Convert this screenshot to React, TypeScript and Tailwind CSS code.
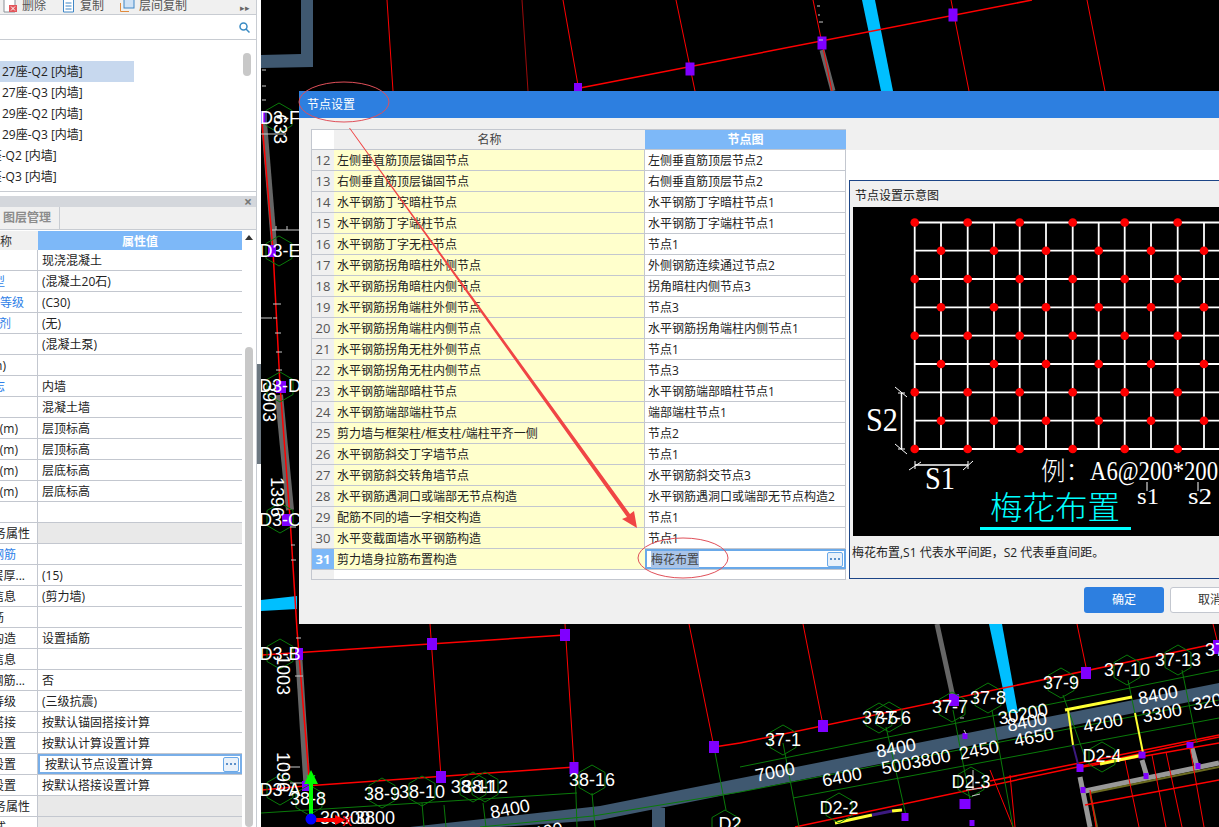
import React from 'react';

const FONT = '"Open Sans", "Noto Sans CJK SC", sans-serif';

type PropRow = {
  label: string;
  right: string;
  value: string;
  blue?: boolean;
  group?: boolean;
  editing?: boolean;
};

const propRows: PropRow[] = [
  { label: '', right: 'pr-0', value: '现浇混凝土' },
  { label: '混凝土类型', right: 'pr-[32px]', value: '(混凝土20石)', blue: true },
  { label: '混凝土强度等级', right: 'pr-[13px]', value: '(C30)', blue: true },
  { label: '混凝土外加剂', right: 'pr-[26px]', value: '(无)', blue: true },
  { label: '', right: 'pr-0', value: '(混凝土泵)' },
  { label: '泵送高度(m)', right: 'pr-[31px]', value: '' },
  { label: '内/外墙标志', right: 'pr-[32px]', value: '内墙', blue: true },
  { label: '', right: 'pr-0', value: '混凝土墙' },
  { label: '起点顶标高(m)', right: 'pr-[19px]', value: '层顶标高' },
  { label: '终点顶标高(m)', right: 'pr-[19px]', value: '层顶标高' },
  { label: '起点底标高(m)', right: 'pr-[19px]', value: '层底标高' },
  { label: '终点底标高(m)', right: 'pr-[19px]', value: '层底标高' },
  { label: '', right: 'pr-0', value: '' },
  { label: '钢筋业务属性', right: 'pr-[7px]', value: '', group: true },
  { label: '其它钢筋', right: 'pr-[21px]', value: '', blue: true },
  { label: '保护层厚...', right: 'pr-[12px]', value: '(15)' },
  { label: '汇总信息', right: 'pr-[21px]', value: '(剪力墙)' },
  { label: '压墙筋', right: 'pr-[33px]', value: '' },
  { label: '纵筋构造', right: 'pr-[21px]', value: '设置插筋' },
  { label: '备注信息', right: 'pr-[21px]', value: '' },
  { label: '水平钢筋...', right: 'pr-[12px]', value: '否' },
  { label: '抗震等级', right: 'pr-[21px]', value: '(三级抗震)' },
  { label: '锚固搭接', right: 'pr-[21px]', value: '按默认锚固搭接计算' },
  { label: '计算设置', right: 'pr-[21px]', value: '按默认计算设置计算' },
  { label: '节点设置', right: 'pr-[21px]', value: '按默认节点设置计算', editing: true },
  { label: '搭接设置', right: 'pr-[21px]', value: '按默认搭接设置计算' },
  { label: '显示业务属性', right: 'pr-[7px]', value: '', group: true },
  { label: '样式', right: 'pr-[31px]', value: '', group: true },
];

const listRows = [
  { text: '27座-Q2 [内墙]', indent: 'ml-[2px]', active: true },
  { text: '27座-Q3 [内墙]', indent: 'ml-[2px]' },
  { text: '29座-Q2 [内墙]', indent: 'ml-[2px]' },
  { text: '29座-Q3 [内墙]', indent: 'ml-[2px]' },
  { text: '27座-Q2 [内墙]', indent: 'ml-[-24px]' },
  { text: '27座-Q3 [内墙]', indent: 'ml-[-24px]' },
];

const nodeRows = [
  [12, '左侧垂直筋顶层锚固节点', '左侧垂直筋顶层节点2'],
  [13, '右侧垂直筋顶层锚固节点', '右侧垂直筋顶层节点2'],
  [14, '水平钢筋丁字暗柱节点', '水平钢筋丁字暗柱节点1'],
  [15, '水平钢筋丁字端柱节点', '水平钢筋丁字端柱节点1'],
  [16, '水平钢筋丁字无柱节点', '节点1'],
  [17, '水平钢筋拐角暗柱外侧节点', '外侧钢筋连续通过节点2'],
  [18, '水平钢筋拐角暗柱内侧节点', '拐角暗柱内侧节点3'],
  [19, '水平钢筋拐角端柱外侧节点', '节点3'],
  [20, '水平钢筋拐角端柱内侧节点', '水平钢筋拐角端柱内侧节点1'],
  [21, '水平钢筋拐角无柱外侧节点', '节点1'],
  [22, '水平钢筋拐角无柱内侧节点', '节点3'],
  [23, '水平钢筋端部暗柱节点', '水平钢筋端部暗柱节点1'],
  [24, '水平钢筋端部端柱节点', '端部端柱节点1'],
  [25, '剪力墙与框架柱/框支柱/端柱平齐一侧', '节点2'],
  [26, '水平钢筋斜交丁字墙节点', '节点1'],
  [27, '水平钢筋斜交转角墙节点', '水平钢筋斜交节点3'],
  [28, '水平钢筋遇洞口或端部无节点构造', '水平钢筋遇洞口或端部无节点构造2'],
  [29, '配筋不同的墙一字相交构造', '节点1'],
  [30, '水平变截面墙水平钢筋构造', '节点1'],
];

// canvas data, in page coordinates
const thinRed = [
  [387, 0, 393, 91], [563, 0, 579, 91], [676, 0, 695, 91], [813, 0, 832, 91], [951, 0, 969, 91], [1087, 0, 1105, 91],
  [430, 624, 441, 777], [565, 624, 574, 765], [689, 624, 714, 747], [803, 624, 822, 720], [1077, 624, 1086, 667], [1213, 624, 1217, 640],
  [1090, 790, 1096, 827], [1125, 760, 1139, 827], [1152, 755, 1166, 827], [1166, 752, 1182, 827], [1190, 748, 1204, 827],
  [990, 770, 1013, 827], [1010, 775, 1015, 827],
];
const thickRed = [
  [580, 88, 1032, 0], [262, 655, 565, 635], [262, 790, 305, 786], [305, 786, 575, 767], [714, 747, 740, 743], [740, 743, 1219, 643],
  [795, 827, 1219, 737], [990, 781, 1219, 735], [1077, 768, 1219, 743], [1085, 805, 1219, 780],
];
const greens = [
  [261, 813, 577, 793], [480, 827, 593, 816], [593, 816, 740, 792], [740, 792, 1219, 700], [740, 767, 1219, 670], [793, 798, 1219, 718],
  [783, 743, 799, 827], [886, 727, 907, 820], [953, 710, 970, 800], [992, 710, 1013, 827], [1063, 695, 1087, 763], [1128, 680, 1143, 753],
  [1182, 670, 1197, 743], [575, 765, 577, 827], [592, 793, 595, 827], [422, 803, 424, 827], [444, 805, 446, 827], [483, 803, 486, 827],
  [714, 747, 726, 810],
];
const hexes = [
  [279, 118], [279, 251], [280, 387], [280, 518], [280, 654], [280, 790], [309, 800], [382, 793], [422, 791], [473, 787], [485, 787], [592, 780],
  [725, 825], [783, 740], [879, 718], [889, 717], [952, 707], [988, 698], [1061, 683], [1127, 670], [1178, 660], [1102, 757], [971, 782], [839, 808],
];
const purples = [
  [578, 88, 8, 10], [690, 69, 9, 13], [822, 43, 9, 13], [953, 15, 9, 13],
  [264, 117, 6, 12], [272, 251, 8, 12], [281, 387, 10, 12], [287, 520, 10, 12], [299, 654, 8, 12], [306, 786, 8, 10],
  [432, 644, 10, 12], [565, 635, 10, 12], [441, 777, 10, 12], [574, 768, 9, 12], [714, 747, 10, 12],
  [823, 726, 10, 12], [954, 700, 10, 12], [1086, 673, 10, 12], [1217, 647, 8, 14],
  [965, 736, 5, 6], [965, 804, 11, 10], [972, 823, 5, 6], [1080, 768, 7, 8], [1142, 755, 7, 7], [1146, 776, 5, 6], [1190, 745, 7, 6], [1198, 766, 5, 6], [905, 817, 7, 8], [1083, 790, 5, 6],
];
const flatLabels: [string, number, number][] = [
  ['D3-F', 280, 124], ['D3-E', 280, 257], ['D3-D', 280, 392], ['D3-C', 280, 526], ['D3-B', 280, 660], ['D3-A', 280, 796],
  ['38-8', 308, 805], ['38-9', 382, 800], ['38-10', 422, 798], ['38-11', 473, 793], ['38-12', 485, 793], ['38-16', 592, 786],
  ['37-1', 783, 746], ['37-5', 880, 724], ['37-6', 893, 724], ['37-7', 950, 713], ['37-8', 988, 704], ['37-9', 1061, 689],
  ['37-10', 1127, 676], ['37-13', 1178, 666], ['37', 1215, 656], ['D2-4', 1102, 762], ['D2-3', 971, 788], ['D2-2', 839, 814],
  ['30300', 345, 824], ['3800', 375, 824], ['D2', 730, 830],
];
const dimLabels: [string, number, number][] = [
  ['7000', 775, 772], ['6400', 842, 777], ['5003800', 916, 762], ['8400', 896, 748], ['2450', 979, 750], ['4650', 1034, 737],
  ['30200', 1023, 714], ['8400', 1027, 722], ['4200', 1103, 723], ['8400', 1158, 695], ['3300', 1162, 713], ['320', 1207, 702],
  ['8400', 510, 809], ['6400', 543, 832],
];
const sideLabels: [string, number, number][] = [
  ['633', 280, 129], ['3903', 269, 402], ['1396', 277, 497], ['1003', 283, 675], ['1096', 283, 772],
];
const ticks = [
  [262, 70, 266, 70], [262, 86, 266, 86], [262, 100, 266, 100], [261, 134, 286, 134], [272, 230, 300, 230], [276, 230, 276, 226], [287, 230, 287, 226],
  [273, 304, 281, 304], [273, 318, 277, 318], [261, 318, 272, 318], [275, 333, 281, 333], [276, 352, 282, 352], [276, 370, 282, 370],
  [290, 527, 296, 527], [291, 545, 295, 545], [291, 560, 296, 560], [296, 638, 301, 638], [295, 676, 303, 676], [287, 767, 300, 767], [290, 783, 302, 783],
  [817, 6, 820, 6], [818, 15, 820, 15], [819, 40, 823, 40], [819, 22, 823, 22],
  [960, 718, 964, 718], [964, 730, 966, 734], [973, 770, 973, 790], [966, 790, 982, 788], [972, 796, 980, 794],
];

const hexPoints = (x: number, y: number) =>
  [0, 1, 2, 3, 4, 5]
    .map((i) => {
      const a = (Math.PI / 3) * i + Math.PI / 6;
      return `${x + 15 * Math.cos(a)},${y + 15 * Math.sin(a)}`;
    })
    .join(' ');

const MoreButton = () => (
  <div className="w-[16px] h-[15px] shrink-0 rounded-[2px] border border-[#6aa9e9] bg-[#e9f1fa] flex items-center justify-center gap-[2px]">
    <span className="w-[2px] h-[2px] bg-[#5b8fc9]" />
    <span className="w-[2px] h-[2px] bg-[#5b8fc9]" />
    <span className="w-[2px] h-[2px] bg-[#5b8fc9]" />
  </div>
);

const Toolbar = () => (
  <div className="h-[15px] shrink-0 flex items-center bg-[#f0f0f0] border-b border-[#c8ccd2] text-[12px] text-[#555] overflow-hidden">
    <svg className="ml-[3px] shrink-0" width="14" height="15" viewBox="0 0 14 15">
      <path d="M1 -3H9L12 0V12H1Z" fill="#fff" stroke="#8a9097" />
      <rect x="6" y="5" width="8" height="7" fill="#e2555a" />
      <path d="M8 6.5L12 10.5M12 6.5L8 10.5" stroke="#fff" />
    </svg>
    <span className="ml-[5px] -mt-[3px]">删除</span>
    <svg className="ml-[17px] shrink-0" width="11" height="15" viewBox="0 0 11 15">
      <path d="M.5 -3H7L10.5 0V12H.5Z" fill="#fff" stroke="#3f86c6" />
      <path d="M2.5 3H8.5M2.5 6H8.5M2.5 9H8.5" stroke="#3f86c6" />
    </svg>
    <span className="ml-[6px] -mt-[3px]">复制</span>
    <svg className="ml-[16px] shrink-0" width="15" height="15" viewBox="0 0 15 15">
      <path d="M.5 3V11.5H9" fill="none" stroke="#e08a3c" />
      <rect x="4" y="-3" width="10" height="11" fill="#cfe2f6" stroke="#3f86c6" />
    </svg>
    <span className="ml-[4px] -mt-[3px]">层间复制</span>
    <span className="ml-auto mr-[6px] text-[9px] text-[#666] leading-none">▸▸</span>
  </div>
);

const SearchRow = () => (
  <div className="h-[25px] shrink-0 flex items-center justify-end pr-[6px] border-b border-[#c8ccd2]">
    <svg width="11" height="11" viewBox="0 0 11 11" fill="none" stroke="#3a8bc4" strokeWidth="1.5">
      <circle cx="4.5" cy="4.5" r="3.5" />
      <path d="M7 7L10.5 10.5" />
    </svg>
  </div>
);

const WallList = () => (
  <div className="relative h-[152px] shrink-0 pt-[21px] border-b border-[#c8ccd2] overflow-hidden">
    {listRows.map((row, i) => (
      <div
        key={i}
        className={`h-[21px] w-[134px] flex items-center whitespace-nowrap text-[12px] text-[#222] ${row.active ? 'bg-[#c7d8ee]' : ''}`}
      >
        <span className={row.indent}>{row.text}</span>
      </div>
    ))}
    <div className="absolute left-[243px] top-[13px] w-[8px] h-[23px] rounded bg-[#c8c8c8]" />
  </div>
);

const PropTable = () => (
  <div className="relative flex-1 min-h-0 pt-px overflow-hidden">
    <div className="h-[19px] w-[242px] flex text-[12px]">
      <div className="w-[38px] bg-[#f0f0f0] flex items-center justify-end overflow-hidden whitespace-nowrap pr-[26px] pt-[2px] text-[#333]">名称</div>
      <div className="flex-1 bg-[#7db8f8] flex items-center justify-center pt-[2px] text-white font-bold text-[12px]">属性值</div>
    </div>
    {propRows.map((row, i) => (
      <div key={i} className="h-[21px] w-[242px] flex text-[12px] border-b border-[#c3c7cf] leading-none">
        <div
          className={`w-[38px] shrink-0 flex items-center justify-end overflow-hidden whitespace-nowrap border-r border-[#c3c7cf] pt-[2px] ${row.right} ${row.blue ? 'text-[#2f7fe8]' : 'text-[#222]'}`}
        >
          <span className="shrink-0">{row.label}</span>
        </div>
        {row.editing ? (
          <div className="flex-1 bg-white border-2 border-[#78aee8] flex items-center justify-between pl-[5px] pr-[1px] text-[#222]">
            <span className="pt-[2px]">{row.value}</span>
            <MoreButton />
          </div>
        ) : (
          <div className={`flex-1 flex items-center pl-[4px] pt-[2px] text-[#222] ${row.group ? 'bg-[#e9e9e9]' : ''}`}>{row.value}</div>
        )}
      </div>
    ))}
    <div className="absolute left-[249px] top-[5px] w-0 h-0 border-l-[4px] border-r-[4px] border-b-[5px] border-l-transparent border-r-transparent border-b-[#333] -translate-x-1/2" />
    <div className="absolute left-[245px] top-[117px] w-[8px] h-[480px] rounded bg-[#c8c8c8]" />
  </div>
);

const LeftPanel = () => (
  <div className="relative w-[261px] h-full shrink-0 flex flex-col bg-white">
    <div className="w-[257px] h-full flex flex-col border-r border-[#c8ccd2]">
      <Toolbar />
      <SearchRow />
      <WallList />
      <div className="h-[4px] shrink-0" />
      <div className="h-[11px] shrink-0 bg-[#d4d7dc] flex items-center justify-end pr-[4px] text-[14px] font-bold leading-none text-[#777]">×</div>
      <div className="h-[23px] shrink-0 flex bg-[#f0f0f0] border-b border-[#c8ccd2]">
        <div className="w-[60px] flex items-center justify-end pr-[8px] border-r border-[#c8ccd2] text-[12px] font-bold text-[#8c8c8c]">图层管理</div>
      </div>
      <PropTable />
    </div>
    <div className="absolute right-0 top-[364px] w-[4px] h-[100px] bg-[#6c7780]" />
  </div>
);

const CadDrawing = () => (
  <svg className="absolute inset-0" width="958" height="827" viewBox="261 0 958 827">
    <path d="M301 0H313V67L261 68V55L301 54Z" fill="#3f5870" />
    <path d="M410 827L600 806L1219 683V696L600 820L500 827Z" fill="#3f5870" />
    <path d="M652 808H665V827H652Z" fill="#3f5870" />
    <path d="M862 0H875L893 91H881Z" fill="#00bfff" />
    <path d="M989 624H1002L1018 713H1008Z" fill="#00bfff" />
    <path d="M261 600L297 596V609L261 611Z" fill="#00bfff" />
    <g stroke="#666" fill="none">
      <path d="M822 50L833 91" strokeWidth="5" />
      <path d="M937 624L953 697" strokeWidth="5" />
      <path d="M264 122L274 245" strokeWidth="6" />
      <path d="M279 395L290 510" strokeWidth="8" />
      <path d="M299 660L307 785" strokeWidth="7" />
    </g>
    <g stroke="#999" fill="none" strokeWidth="5">
      <path d="M1085 791L1219 763" />
      <path d="M1080 777L1090 827" />
      <path d="M1142 760L1148 780" />
      <path d="M1192 748L1198 770" />
    </g>
    <path d="M1090 793L1219 767M1090 793L1097 827" stroke="#6b6b20" strokeWidth="2" fill="none" />
    <path d="M522 0L528 91" stroke="#9e0b0b" fill="none" />
    <g stroke="#ff0000" strokeWidth="1">
      {thinRed.map((l, i) => (
        <line key={i} x1={l[0]} y1={l[1]} x2={l[2]} y2={l[3]} />
      ))}
    </g>
    <g stroke="#ff0000" strokeWidth="1.5">
      {thickRed.map((l, i) => (
        <line key={i} x1={l[0]} y1={l[1]} x2={l[2]} y2={l[3]} />
      ))}
    </g>
    <polyline points="262,122 273,250 280,385 290,518 297,630 310,790" fill="none" stroke="#ff0000" strokeWidth="1.5" />
    <g stroke="#0a7a0a" strokeWidth="1">
      {greens.map((l, i) => (
        <line key={i} x1={l[0]} y1={l[1]} x2={l[2]} y2={l[3]} />
      ))}
    </g>
    <g stroke="#ffff33" fill="none">
      <path d="M1065 710L1132 697" strokeWidth="3" />
      <path d="M1068 710L1073 745" strokeWidth="2" />
      <path d="M1135 713L1143 753" strokeWidth="2" />
      <path d="M1100 764L1143 755" strokeWidth="3" />
      <path d="M835 823L872 815M892 811L902 810" strokeWidth="3" />
    </g>
    <path d="M872 815L892 811" stroke="#3c1a80" strokeWidth="3" />
    <path d="M1073 745L1079 768" stroke="#3c1a80" strokeWidth="2" />
    <g fill="#8000ff">
      {purples.map((p, i) => (
        <rect key={i} x={p[0] - p[2] / 2} y={p[1] - p[3] / 2} width={p[2]} height={p[3]} />
      ))}
    </g>
    <g fill="none" stroke="#0a7a0a">
      {hexes.map((h, i) => (
        <polygon key={i} points={hexPoints(h[0], h[1])} />
      ))}
    </g>
    <g stroke="#c8c8c8">
      {ticks.map((l, i) => (
        <line key={i} x1={l[0]} y1={l[1]} x2={l[2]} y2={l[3]} />
      ))}
    </g>
    <g fill="#fff" fontFamily="'Liberation Sans', sans-serif" fontSize="18" textAnchor="middle">
      {flatLabels.map(([t, x, y], i) => (
        <text key={i} x={x} y={y}>{t}</text>
      ))}
      {dimLabels.map(([t, x, y], i) => (
        <text key={i} x={x} y={y + 6} transform={`rotate(-11 ${x} ${y})`}>{t}</text>
      ))}
      {sideLabels.map(([t, x, y], i) => (
        <text key={i} x={x} y={y + 6} transform={`rotate(90 ${x} ${y})`}>{t}</text>
      ))}
    </g>
    <path d="M309 815V784H304L311 770L318 784H313V815Z" fill="#00ff00" />
    <path d="M307 775L311 781L315 775" stroke="#00ff00" fill="none" />
    <path d="M316 818H335V815L346 820L335 825V822H316Z" fill="#ff0000" />
    <circle cx="311" cy="819" r="5.5" fill="#0000ff" />
    <text x="342" y="826" fill="#ff0000" fontSize="15" fontFamily="'Liberation Sans', sans-serif">X</text>
  </svg>
);

const gridXs = [914.7, 941, 967.7, 994, 1019.7, 1046, 1072.7, 1098.7, 1124.7, 1151, 1177.7, 1204];
const gridYs = [222.5, 250.7, 279, 307.3, 335.7, 364, 392.3, 420.7, 449];

const PlumDiagram = () => (
  <svg className="block shrink-0" width="366" height="329" viewBox="853 207 366 329">
    <rect x="853" y="207" width="366" height="329" fill="#000" />
    <g stroke="#fff" strokeWidth="1.8">
      {gridYs.map((y) => (
        <line key={y} x1="914.7" y1={y} x2="1219" y2={y} />
      ))}
      {gridXs.map((x) => (
        <line key={x} x1={x} y1="222.5" x2={x} y2="449" />
      ))}
    </g>
    <g fill="#ff0000">
      {gridYs.map((y, r) =>
        gridXs.map((x, c) => (c % 2 === r % 2 ? <circle key={`${r}-${c}`} cx={x} cy={y} r="4.3" /> : null)),
      )}
    </g>
    <g stroke="#fff" fill="none">
      <path d="M901.5 393V449" strokeWidth="1.5" />
      <path d="M895 387L907 397M895 444L907 454M898 393H905M898 449H905" />
      <path d="M915 465H968" strokeWidth="1.5" />
      <path d="M909 470L921 462M963 470L973 461M915 461V469M968 461V469" />
      <path d="M1147 482V491M1198 482V491" />
    </g>
    <g fill="#fff" fontFamily="'Liberation Serif', serif">
      <text x="866" y="431" fontSize="34" textLength="32" lengthAdjust="spacingAndGlyphs">S2</text>
      <text x="925" y="489" fontSize="32" textLength="30" lengthAdjust="spacingAndGlyphs">S1</text>
      <text x="1041" y="480" fontSize="25" textLength="49" lengthAdjust="spacingAndGlyphs" fontFamily="'Noto Sans CJK SC', sans-serif" fontWeight="300">例：</text>
      <text x="1090" y="480" fontSize="27" textLength="128" lengthAdjust="spacingAndGlyphs">A6@200*200</text>
      <text x="1137" y="504" fontSize="24" textLength="22" lengthAdjust="spacingAndGlyphs">s1</text>
      <text x="1188" y="504" fontSize="24" textLength="24" lengthAdjust="spacingAndGlyphs">s2</text>
    </g>
    <text x="990" y="519" fill="#00ffff" fontSize="32" textLength="130" lengthAdjust="spacingAndGlyphs" fontFamily="'Noto Sans CJK SC', sans-serif" fontWeight="300">梅花布置</text>
    <rect x="980" y="527" width="151" height="3" fill="#00ffff" />
  </svg>
);

const NodeTable = () => (
  <div className="w-[535px] h-[451px] shrink-0 flex flex-col border-l border-b border-t border-[#c3c7cf] text-[12px] leading-none text-[#222]">
    <div className="h-[20px] shrink-0 flex border-b border-[#c3c7cf]">
      <div className="w-[22px] bg-white" />
      <div className="w-[311px] bg-[#f0f0f0] flex items-center justify-center pt-px text-[#444]">名称</div>
      <div className="flex-1 bg-[#7db8f8] flex items-center justify-center pt-px text-white font-bold">节点图</div>
    </div>
    {nodeRows.map((row) => (
      <div key={row[0]} className="h-[21px] shrink-0 flex border-b border-[#c3c7cf]">
        <div className="w-[22px] bg-[#f0f0f0] flex items-center justify-center pt-px text-[13px] text-[#555]">{row[0]}</div>
        <div className="w-[311px] bg-[#ffffcc] flex items-center pl-[3px] pt-[2px] border-r border-[#c3c7cf]">{row[1]}</div>
        <div className="flex-1 bg-white flex items-center pl-[3px] pt-[2px] border-r border-[#c3c7cf]">{row[2]}</div>
      </div>
    ))}
    <div className="h-[21px] shrink-0 flex border-b border-[#c3c7cf]">
      <div className="w-[22px] bg-[#7db8f8] flex items-center justify-center pt-px text-[13px] font-bold text-white">31</div>
      <div className="w-[311px] bg-[#ffffcc] flex items-center pl-[3px] pt-[2px]">剪力墙身拉筋布置构造</div>
      <div className="flex-1 bg-white border-2 border-[#6aa9e9] flex items-center justify-between pl-[4px] pr-[1px]">
        <span className="bg-[#a9c4e8] text-[#444] pt-[3px] pb-[2px]">梅花布置</span>
        <MoreButton />
      </div>
    </div>
    <div className="flex-1 flex">
      <div className="w-[22px] bg-[#f0f0f0]" />
      <div className="flex-1 bg-white border-r border-[#c3c7cf]" />
    </div>
  </div>
);

const NodeDialog = () => (
  <div className="absolute left-[38px] top-[91px] w-[1000px] h-[533px] flex flex-col bg-[#f0f0f0] text-[12px]">
    <div className="h-[27px] shrink-0 bg-[#2d7fe0] flex items-center pl-[8px] text-white">节点设置</div>
    <div className="pl-[12px] pt-[11px] flex">
      <NodeTable />
      <div className="flex-1 flex flex-col h-[450px]">
        <div className="h-[21px] shrink-0" />
        <div className="flex-1 bg-white pl-[3px] pt-[30px] flex flex-col">
          <div className="flex-1 border-l border-t border-b border-[#1c4587] bg-[#f0f0f0] pl-[3px] flex flex-col">
            <div className="h-[26px] shrink-0 flex items-center pl-[2px] pt-[3px] text-[#222]">节点设置示意图</div>
            <PlumDiagram />
            <div className="pt-[11px] -ml-[1px] text-[#222] leading-none whitespace-nowrap">梅花布置,S1 代表水平间距，S2 代表垂直间距。</div>
          </div>
        </div>
      </div>
    </div>
    <div className="flex pl-[785px] pt-[7px] gap-[6px]">
      <div className="w-[80px] h-[26px] shrink-0 rounded-[3px] bg-[#2d7fe0] text-white flex items-center justify-center">确定</div>
      <div className="w-[80px] h-[26px] shrink-0 rounded-[3px] bg-white border border-[#c3c7cf] text-[#333] flex items-center justify-center">取消</div>
    </div>
  </div>
);

const Annotations = () => (
  <svg className="absolute inset-0 pointer-events-none" width="958" height="827" viewBox="261 0 958 827">
    <g fill="none" stroke="#e0505a" strokeWidth="1">
      <ellipse cx="344" cy="102" rx="45" ry="20" />
      <ellipse cx="683" cy="558" rx="45" ry="20" />
    </g>
    <path d="M349 128L350 128L630 514L634 511L637 528L622 519L627 517Z" fill="#f04545" />
  </svg>
);

export default function App() {
  return (
    <div className="w-[1219px] h-[827px] flex overflow-hidden" style={{ fontFamily: FONT }}>
      <LeftPanel />
      <div className="relative flex-1 bg-black overflow-hidden">
        <CadDrawing />
        <NodeDialog />
        <Annotations />
      </div>
    </div>
  );
}
